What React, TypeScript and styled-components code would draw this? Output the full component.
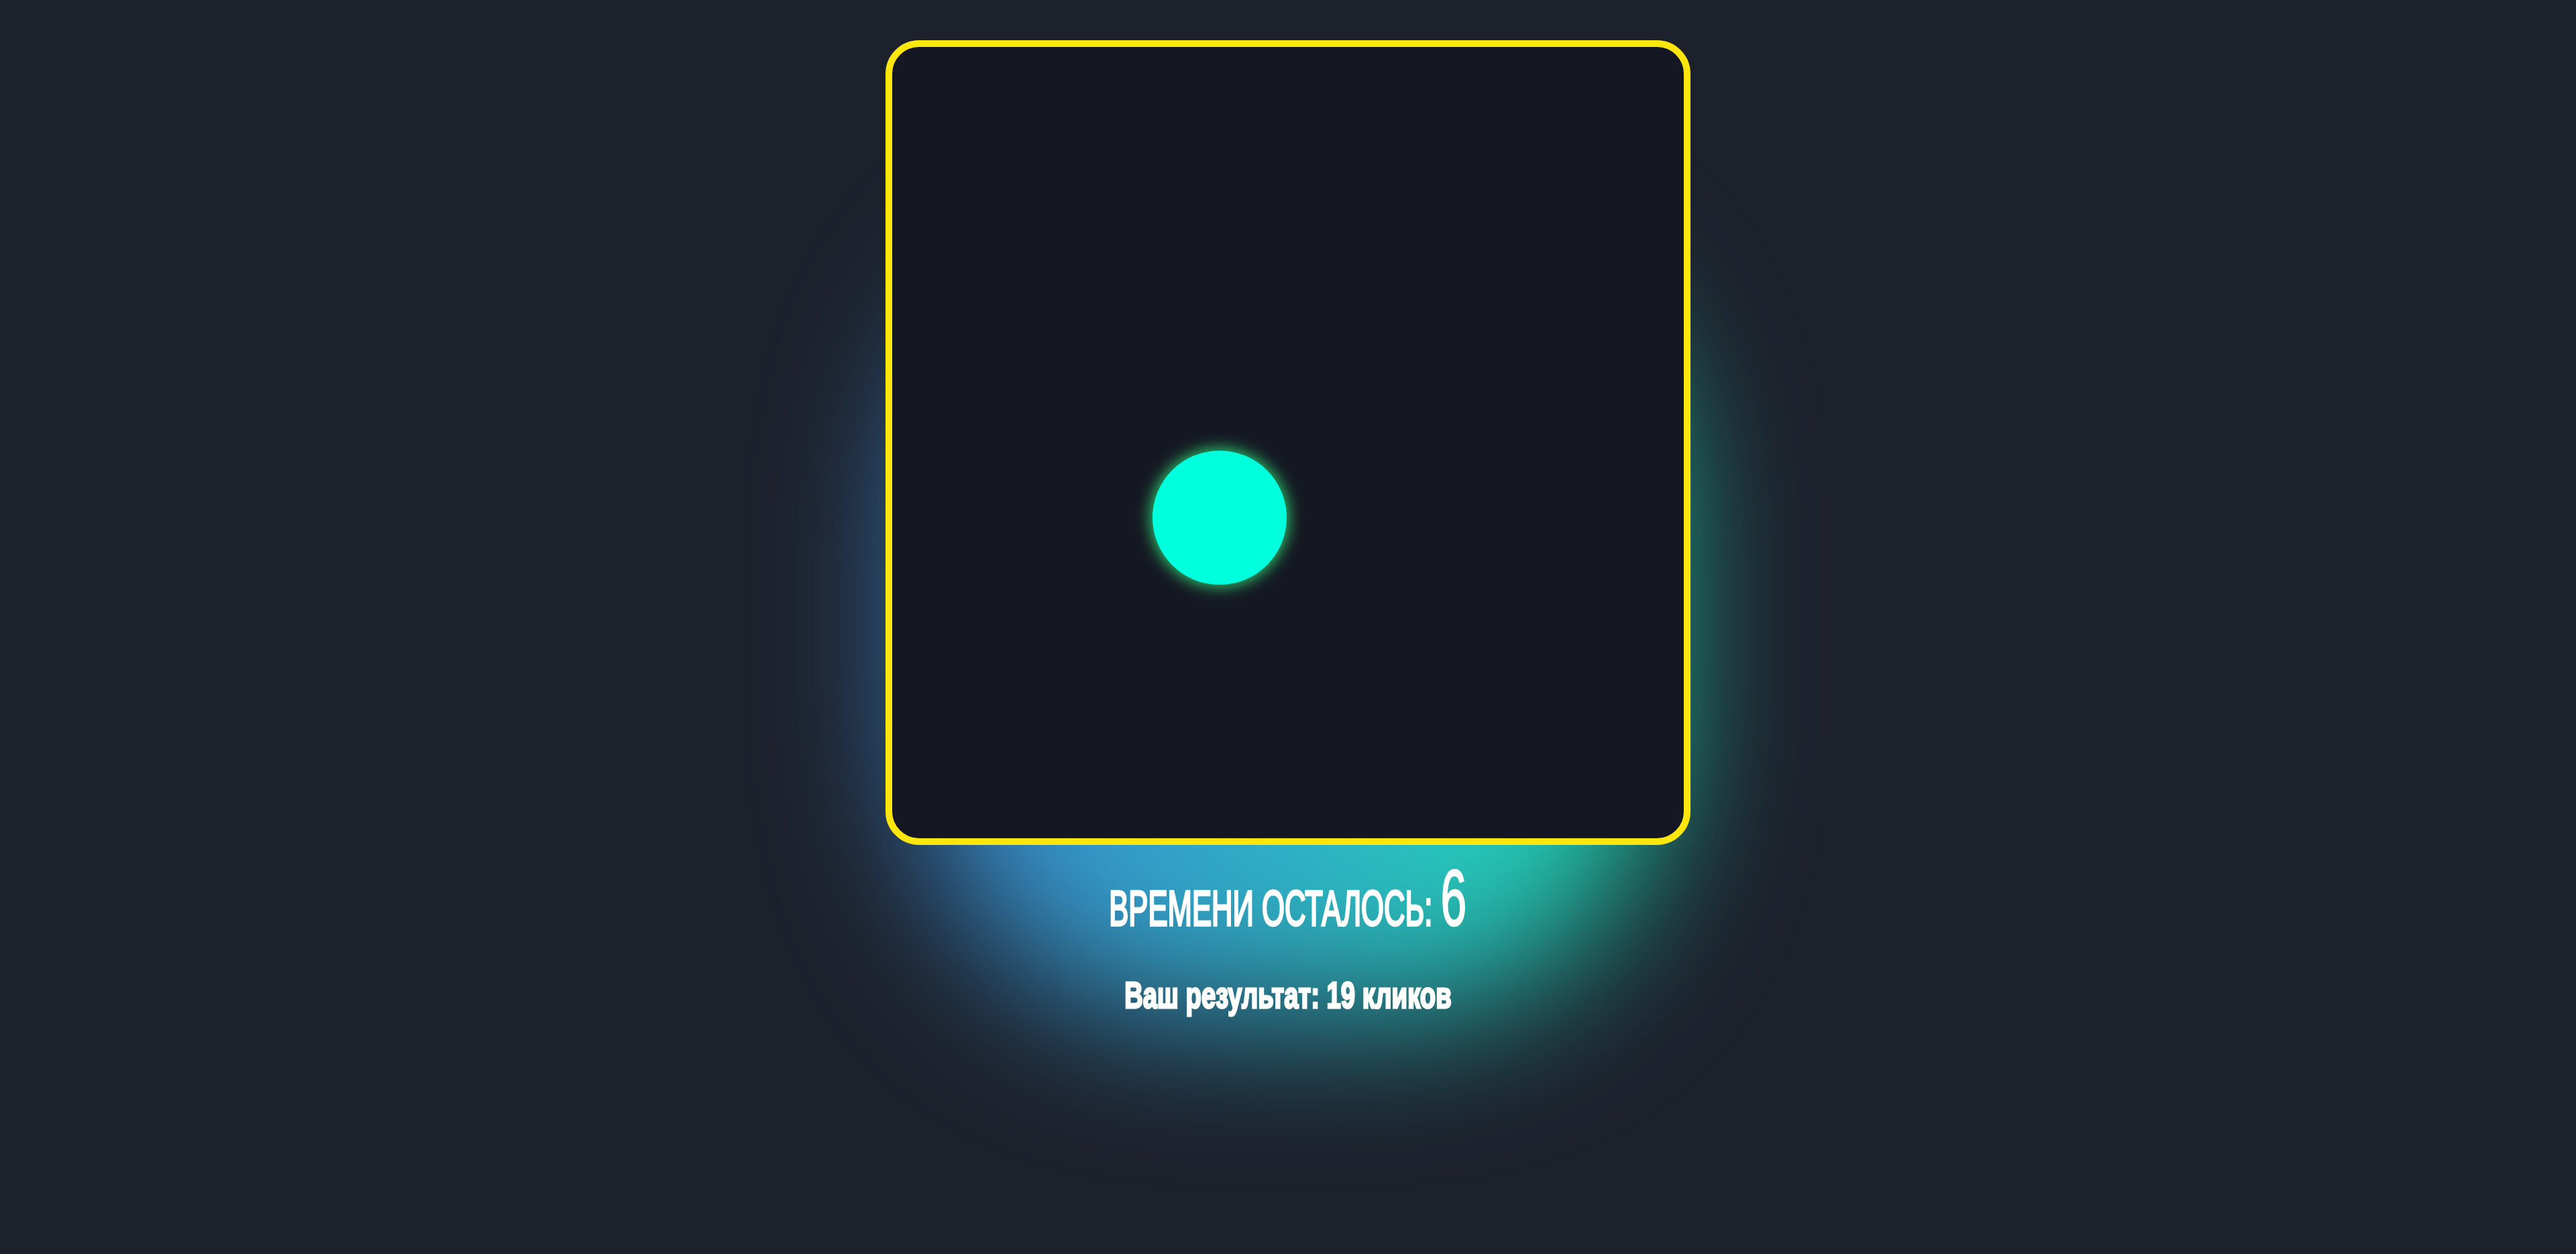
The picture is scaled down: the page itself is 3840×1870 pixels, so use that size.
import React from "react";
import styled, { createGlobalStyle } from "styled-components";

const GlobalStyle = createGlobalStyle`
  html, body {
    margin: 0;
    padding: 0;
    background: #1d212c;
    min-height: 100%;
  }
  body {
    font-family: "Liberation Sans", Arial, sans-serif;
    color: #ffffff;
    overflow: hidden;
  }
`;

const Page = styled.main`
  min-height: 1870px;
  display: flex;
  flex-direction: column;
  align-items: center;
  padding-top: 60px;
  box-sizing: border-box;
`;

const Stage = styled.section`
  position: relative;
  display: flex;
  flex-direction: column;
  align-items: center;
  isolation: isolate;
`;

const Glow = styled.div`
  position: absolute;
  left: 50px;
  top: 280px;
  width: 1100px;
  height: 1170px;
  border-radius: 35%;
  background: linear-gradient(90deg, #3b86d2 0%, #2fb0c6 50%, #1de0b0 100%);
  filter: blur(110px);
  z-index: -1;
`;

const Board = styled.div`
  position: relative;
  width: 1200px;
  height: 1200px;
  box-sizing: border-box;
  border: 10px solid #ffe70d;
  border-radius: 50px;
  background: #151822;
`;

const Target = styled.button<{ $size: number }>`
  position: absolute;
  width: ${(p) => p.$size}px;
  height: ${(p) => p.$size}px;
  border: none;
  padding: 0;
  border-radius: 50%;
  background: #00ffdd;
  box-shadow: 0 0 22px 3px #2ecc71;
  cursor: pointer;
`;

const Timer = styled.h2`
  margin: 20px 0 0;
  font-weight: 400;
  font-size: 74px;
  line-height: 1;
  white-space: nowrap;
  -webkit-text-stroke: 3.5px #ffffff;
  transform: scaleX(0.59);
  transform-origin: center;
`;

const TimeValue = styled.span`
  font-size: 118px;
  line-height: 1;
  -webkit-text-stroke: 2.5px #ffffff;
`;

const Result = styled.p`
  margin: 58px 0 0;
  font-weight: 700;
  font-size: 56px;
  line-height: 1;
  white-space: nowrap;
  -webkit-text-stroke: 3px #ffffff;
  transform: scaleX(0.683);
  transform-origin: center;
`;

export default function App() {
  const ball = { x: 388, y: 602, size: 200 };
  return (
    <>
      <GlobalStyle />
      <Page>
        <Stage>
          <Glow />
          <Board>
            <Target
              $size={ball.size}
              style={{ left: ball.x, top: ball.y }}
              aria-label="target"
            />
          </Board>
          <Timer>
            ВРЕМЕНИ ОСТАЛОСЬ: <TimeValue>6</TimeValue>
          </Timer>
          <Result>Ваш результат: 19 кликов</Result>
        </Stage>
      </Page>
    </>
  );
}
